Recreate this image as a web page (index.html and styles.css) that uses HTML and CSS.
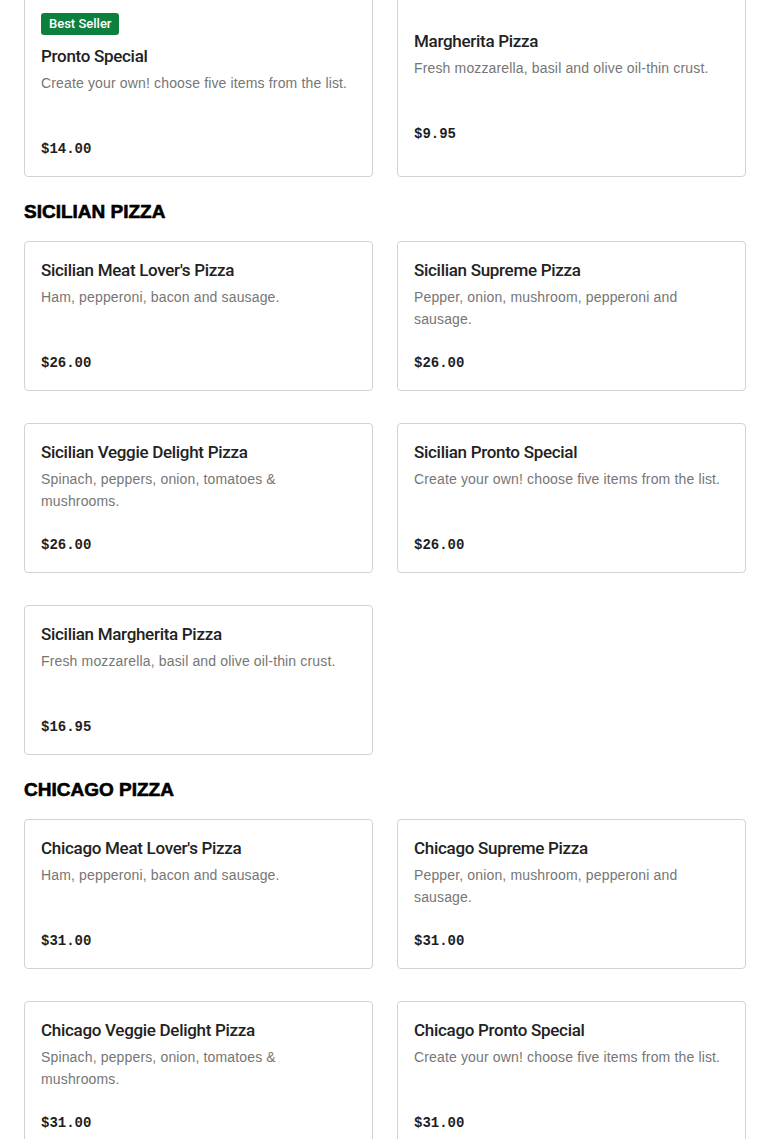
FILE: index.html
```html
<!DOCTYPE html>
<html lang="en">
<head>
<meta charset="utf-8">
<title>Menu</title>
<link rel="stylesheet" href="styles.css">
</head>
<body>
<main class="page">
  <div class="grid grid-first">
    <div class="card">
      <span class="badge">Best Seller</span>
      <h3 class="title">Pronto Special</h3>
      <p class="desc">Create your own! choose five items from the list.</p>
      <p class="price">$14.00</p>
    </div>
    <div class="card">
      <h3 class="title">Margherita Pizza</h3>
      <p class="desc">Fresh mozzarella, basil and olive oil-thin crust.</p>
      <p class="price">$9.95</p>
    </div>
  </div>

  <h2 class="section-title">SICILIAN PIZZA</h2>
  <div class="grid">
    <div class="card">
      <h3 class="title">Sicilian Meat Lover's Pizza</h3>
      <p class="desc">Ham, pepperoni, bacon and sausage.</p>
      <p class="price">$26.00</p>
    </div>
    <div class="card">
      <h3 class="title">Sicilian Supreme Pizza</h3>
      <p class="desc">Pepper, onion, mushroom, pepperoni and sausage.</p>
      <p class="price">$26.00</p>
    </div>
    <div class="card">
      <h3 class="title">Sicilian Veggie Delight Pizza</h3>
      <p class="desc">Spinach, peppers, onion, tomatoes &amp; mushrooms.</p>
      <p class="price">$26.00</p>
    </div>
    <div class="card">
      <h3 class="title">Sicilian Pronto Special</h3>
      <p class="desc">Create your own! choose five items from the list.</p>
      <p class="price">$26.00</p>
    </div>
    <div class="card">
      <h3 class="title">Sicilian Margherita Pizza</h3>
      <p class="desc">Fresh mozzarella, basil and olive oil-thin crust.</p>
      <p class="price">$16.95</p>
    </div>
  </div>

  <h2 class="section-title">CHICAGO PIZZA</h2>
  <div class="grid">
    <div class="card">
      <h3 class="title">Chicago Meat Lover's Pizza</h3>
      <p class="desc">Ham, pepperoni, bacon and sausage.</p>
      <p class="price">$31.00</p>
    </div>
    <div class="card">
      <h3 class="title">Chicago Supreme Pizza</h3>
      <p class="desc">Pepper, onion, mushroom, pepperoni and sausage.</p>
      <p class="price">$31.00</p>
    </div>
    <div class="card">
      <h3 class="title">Chicago Veggie Delight Pizza</h3>
      <p class="desc">Spinach, peppers, onion, tomatoes &amp; mushrooms.</p>
      <p class="price">$31.00</p>
    </div>
    <div class="card">
      <h3 class="title">Chicago Pronto Special</h3>
      <p class="desc">Create your own! choose five items from the list.</p>
      <p class="price">$31.00</p>
    </div>
  </div>
</main>
</body>
</html>
```
FILE: styles.css
```css
* { box-sizing: border-box; }
html, body { margin: 0; padding: 0; background: #fff; }
body {
  font-family: "Liberation Sans", Arial, sans-serif;
  color: #222;
}
.page {
  padding: 0 24px 40px;
}
.grid {
  display: grid;
  grid-template-columns: 1fr 1fr;
  column-gap: 24px;
  row-gap: 32px;
}
.grid-first {
  margin-top: -4px;
}
.section-title {
  margin: 23px 0 17px;
  font-family: "Liberation Sans", Arial, sans-serif;
  font-weight: 700;
  font-size: 19px;
  line-height: 24px;
  color: #000;
  -webkit-text-stroke: 0.6px #000;
}
.card {
  border: 1px solid #d3d3d3;
  border-radius: 4px;
  padding: 16px 16px 15px;
  display: flex;
  flex-direction: column;
  justify-content: center;
  align-items: flex-start;
  background: #fff;
}
.badge {
  display: inline-block;
  height: 22px;
  line-height: 22px;
  padding: 0 8px;
  margin-bottom: 9px;
  background: #0d7f3f;
  color: #fff;
  font-family: Roboto, "Liberation Sans", sans-serif;
  font-size: 13px;
  font-weight: 500;
  border-radius: 3px;
}
.title {
  margin: 0;
  font-family: Roboto, "Liberation Sans", sans-serif;
  font-size: 17px;
  line-height: 24px;
  font-weight: 500;
  letter-spacing: -0.3px;
  color: #222;
}
.desc {
  margin: 4px 0 0;
  font-size: 14px;
  line-height: 22px;
  min-height: 44px;
  letter-spacing: 0.15px;
  color: #767676;
}
.price {
  margin: 21px 0 0;
  font-family: "Liberation Mono", "Courier New", monospace;
  font-weight: 700;
  font-size: 14px;
  line-height: 24px;
  color: #1e1e1e;
}
```
